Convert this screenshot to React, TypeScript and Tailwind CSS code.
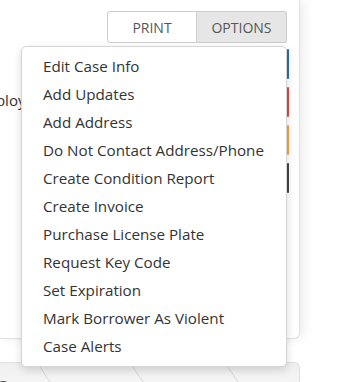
const items = [
  "Edit Case Info",
  "Add Updates",
  "Add Address",
  "Do Not Contact Address/Phone",
  "Create Condition Report",
  "Create Invoice",
  "Purchase License Plate",
  "Request Key Code",
  "Set Expiration",
  "Mark Borrower As Violent",
  "Case Alerts",
];

const bars = ["bg-[#2d6bb0]", "bg-[#d54c4c]", "bg-[#eea743]", "bg-[#444444]"];

export default function App() {
  return (
    <div className="relative w-[346px] h-[382px] overflow-hidden bg-white font-['Open_Sans',sans-serif]">
      {/* case card */}
      <div className="w-[300px] h-[339px] bg-white border-r border-b border-[#e0e0e0] rounded-br-[6px] shadow-[4px_0_12px_rgba(0,0,0,0.07)]">
        <div className="flex justify-end pt-[11px] pr-[12px]">
          <button className="w-[90px] h-[32px] border border-[#cccccc] rounded-l-[3px] bg-white text-[14px] text-[#555]">
            PRINT
          </button>
          <button className="w-[90px] h-[32px] border border-l-0 border-[#cccccc] rounded-r-[3px] bg-[#e6e6e6] text-[14px] text-[#555]">
            OPTIONS
          </button>
        </div>
        <div className="flex justify-between mt-[6px]">
          <div className="w-[40px] flex justify-end pt-[44px]">
            <span className="whitespace-nowrap text-[15px] text-[#333] leading-none">Employer</span>
          </div>
          <div className="flex flex-col gap-[8px] mr-[10px]">
            {bars.map((b) => (
              <div key={b} className={`w-[2px] h-[30px] rounded-full ${b}`} />
            ))}
          </div>
        </div>
      </div>

      {/* next card */}
      <div className="relative mt-[23px] w-[300px] h-[30px] border-t border-r border-[#e0e0e0] rounded-tr-[6px] bg-gradient-to-b from-[#efefef] to-[#f8f8f8] overflow-hidden">
        <svg className="absolute inset-0" width="300" height="30">
          <line x1="38" y1="1" x2="52" y2="22" stroke="#d6d6d6" />
          <line x1="131" y1="1" x2="145" y2="22" stroke="#d6d6d6" />
          <line x1="226" y1="1" x2="240" y2="22" stroke="#d6d6d6" />
          <circle cx="3" cy="28" r="10" fill="#4a4a4a" />
        </svg>
      </div>

      {/* options dropdown */}
      <div className="absolute left-[21px] top-[46px] w-[266px] h-[321px] py-[5px] bg-white border border-[#d6d6d6] rounded-[5px] shadow-[0_3px_8px_rgba(0,0,0,0.15)]">
        {items.map((t) => (
          <div key={t} className="h-[28px] pl-[21px] flex items-center text-[15.2px] text-[#333]">
            {t}
          </div>
        ))}
      </div>
    </div>
  );
}
